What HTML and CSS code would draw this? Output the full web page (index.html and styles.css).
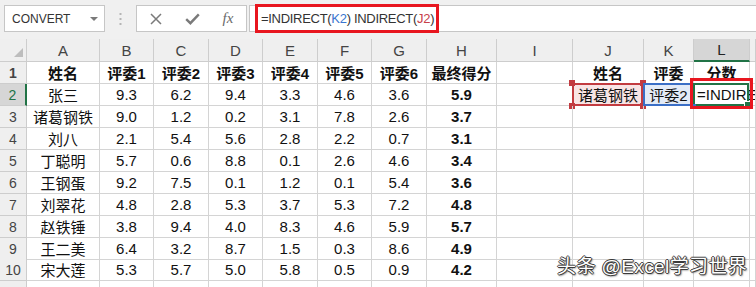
FILE: index.html
```html
<!DOCTYPE html>
<html lang="zh-CN">
<head>
    <meta charset="UTF-8">
    <title>INDIRECT</title>
    <link rel="stylesheet" href="styles.css">
</head>
<body>
    <div class="formula-bar">
        <div class="name-box">
            <span>CONVERT</span>
            <span class="caret-down"></span>
        </div>
        <div class="bar-dots">
            <svg width="3" height="12" viewBox="0 0 3 12"><rect x="0.5" y="0" width="2" height="2" fill="#b5b5b5"/><rect x="0.5" y="5" width="2" height="2" fill="#b5b5b5"/><rect x="0.5" y="10" width="2" height="2" fill="#b5b5b5"/></svg>
        </div>
        <div class="bar-buttons">
            <span class="bar-btn">
                <svg width="12" height="12" viewBox="0 0 12 12"><path d="M1 1L11 11M11 1L1 11" stroke="#7a7a7a" stroke-width="1.5" fill="none"/></svg>
            </span>
            <span class="bar-btn">
                <svg width="15" height="12" viewBox="0 0 15 12"><path d="M1.2 6.2L5.4 10.2L13.8 1.4" stroke="#7a7a7a" stroke-width="2.4" fill="none"/></svg>
            </span>
            <span class="bar-btn fx">fx</span>
        </div>
        <div class="formula-input">
            <div class="formula-mark">=INDIRECT(<span class="ref-k">K2</span>) INDIRECT(<span class="ref-j">J2</span>)<span class="text-cursor"></span></div>
        </div>
    </div>

    <div class="sheet">
        <div class="row head-row">
            <div class="cell corner"><span class="corner-tri"></span></div>
            <div class="cell col-head">A</div>
            <div class="cell col-head">B</div>
            <div class="cell col-head">C</div>
            <div class="cell col-head">D</div>
            <div class="cell col-head">E</div>
            <div class="cell col-head">F</div>
            <div class="cell col-head">G</div>
            <div class="cell col-head">H</div>
            <div class="cell col-head">I</div>
            <div class="cell col-head">J</div>
            <div class="cell col-head">K</div>
            <div class="cell col-head active-col">L</div>
            <div class="cell col-head"></div>
        </div>
        <div class="row bold">
            <div class="cell row-head">1</div>
            <div class="cell">姓名</div>
            <div class="cell">评委1</div>
            <div class="cell">评委2</div>
            <div class="cell">评委3</div>
            <div class="cell">评委4</div>
            <div class="cell">评委5</div>
            <div class="cell">评委6</div>
            <div class="cell">最终得分</div>
            <div class="cell"></div>
            <div class="cell">姓名</div>
            <div class="cell">评委</div>
            <div class="cell">分数</div>
            <div class="cell"></div>
        </div>
        <div class="row">
            <div class="cell row-head active-row">2</div>
            <div class="cell">张三</div>
            <div class="cell">9.3</div>
            <div class="cell">6.2</div>
            <div class="cell">9.4</div>
            <div class="cell">3.3</div>
            <div class="cell">4.6</div>
            <div class="cell">3.6</div>
            <div class="cell score">5.9</div>
            <div class="cell"></div>
            <div class="cell ref-cell ref-red">诸葛钢铁<span class="ref-frame"></span></div>
            <div class="cell ref-cell ref-blue">评委2<span class="ref-frame"></span></div>
            <div class="cell edit-cell">=INDIRE<span class="edit-frame"></span><span class="note-box"></span></div>
            <div class="cell"></div>
        </div>
        <div class="row">
            <div class="cell row-head">3</div>
            <div class="cell">诸葛钢铁</div>
            <div class="cell">9.0</div>
            <div class="cell">1.2</div>
            <div class="cell">0.2</div>
            <div class="cell">3.1</div>
            <div class="cell">7.8</div>
            <div class="cell">2.6</div>
            <div class="cell score">3.7</div>
            <div class="cell"></div>
            <div class="cell"></div>
            <div class="cell"></div>
            <div class="cell"></div>
            <div class="cell"></div>
        </div>
        <div class="row">
            <div class="cell row-head">4</div>
            <div class="cell">刘八</div>
            <div class="cell">2.1</div>
            <div class="cell">5.4</div>
            <div class="cell">5.6</div>
            <div class="cell">2.8</div>
            <div class="cell">2.2</div>
            <div class="cell">0.7</div>
            <div class="cell score">3.1</div>
            <div class="cell"></div>
            <div class="cell"></div>
            <div class="cell"></div>
            <div class="cell"></div>
            <div class="cell"></div>
        </div>
        <div class="row">
            <div class="cell row-head">5</div>
            <div class="cell">丁聪明</div>
            <div class="cell">5.7</div>
            <div class="cell">0.6</div>
            <div class="cell">8.8</div>
            <div class="cell">0.1</div>
            <div class="cell">2.6</div>
            <div class="cell">4.6</div>
            <div class="cell score">3.4</div>
            <div class="cell"></div>
            <div class="cell"></div>
            <div class="cell"></div>
            <div class="cell"></div>
            <div class="cell"></div>
        </div>
        <div class="row">
            <div class="cell row-head">6</div>
            <div class="cell">王钢蛋</div>
            <div class="cell">9.2</div>
            <div class="cell">7.5</div>
            <div class="cell">0.1</div>
            <div class="cell">1.2</div>
            <div class="cell">0.1</div>
            <div class="cell">5.4</div>
            <div class="cell score">3.6</div>
            <div class="cell"></div>
            <div class="cell"></div>
            <div class="cell"></div>
            <div class="cell"></div>
            <div class="cell"></div>
        </div>
        <div class="row">
            <div class="cell row-head">7</div>
            <div class="cell">刘翠花</div>
            <div class="cell">4.8</div>
            <div class="cell">2.8</div>
            <div class="cell">5.3</div>
            <div class="cell">3.7</div>
            <div class="cell">5.3</div>
            <div class="cell">7.2</div>
            <div class="cell score">4.8</div>
            <div class="cell"></div>
            <div class="cell"></div>
            <div class="cell"></div>
            <div class="cell"></div>
            <div class="cell"></div>
        </div>
        <div class="row">
            <div class="cell row-head">8</div>
            <div class="cell">赵铁锤</div>
            <div class="cell">3.8</div>
            <div class="cell">9.4</div>
            <div class="cell">4.0</div>
            <div class="cell">8.3</div>
            <div class="cell">4.6</div>
            <div class="cell">5.9</div>
            <div class="cell score">5.7</div>
            <div class="cell"></div>
            <div class="cell"></div>
            <div class="cell"></div>
            <div class="cell"></div>
            <div class="cell"></div>
        </div>
        <div class="row short">
            <div class="cell row-head">9</div>
            <div class="cell">王二美</div>
            <div class="cell">6.4</div>
            <div class="cell">3.2</div>
            <div class="cell">8.7</div>
            <div class="cell">1.5</div>
            <div class="cell">0.3</div>
            <div class="cell">8.6</div>
            <div class="cell score">4.9</div>
            <div class="cell"></div>
            <div class="cell"></div>
            <div class="cell"></div>
            <div class="cell"></div>
            <div class="cell"></div>
        </div>
        <div class="row">
            <div class="cell row-head">10</div>
            <div class="cell">宋大莲</div>
            <div class="cell">5.3</div>
            <div class="cell">5.7</div>
            <div class="cell">5.0</div>
            <div class="cell">5.8</div>
            <div class="cell">0.5</div>
            <div class="cell">0.9</div>
            <div class="cell score">4.2</div>
            <div class="cell"></div>
            <div class="cell"></div>
            <div class="cell"></div>
            <div class="cell"></div>
            <div class="cell"></div>
        </div>
        <div class="row">
            <div class="cell row-head"></div>
            <div class="cell"></div>
            <div class="cell"></div>
            <div class="cell"></div>
            <div class="cell"></div>
            <div class="cell"></div>
            <div class="cell"></div>
            <div class="cell"></div>
            <div class="cell"></div>
            <div class="cell"></div>
            <div class="cell"></div>
            <div class="cell"></div>
            <div class="cell"></div>
            <div class="cell"></div>
        </div>
    </div>

    <div class="watermark">头条 @Excel学习世界</div>
</body>
</html>
```

FILE: styles.css
```css
body {
    margin: 0;
    width: 756px;
    height: 287px;
    overflow: hidden;
    position: relative;
    background-color: #fff;
    font-family: "Liberation Sans", "Noto Sans CJK SC", sans-serif;
    color: #111;
}

/* formula bar */
.formula-bar {
    display: flex;
    align-items: flex-start;
    height: 39px;
    padding: 5px 0 0 4px;
    box-sizing: border-box;
    background-color: #f0f0f0;
}
.name-box {
    display: flex;
    align-items: center;
    justify-content: space-between;
    width: 101px;
    height: 27px;
    box-sizing: border-box;
    padding: 0 6px 0 7px;
    border: 1px solid #c6c6c6;
    background-color: #fff;
    font-size: 12px;
    color: #333;
}
.caret-down {
    width: 0;
    height: 0;
    border-left: 4px solid transparent;
    border-right: 4px solid transparent;
    border-top: 4px solid #7a7a7a;
}
.bar-dots {
    display: flex;
    align-items: center;
    justify-content: center;
    width: 31px;
    height: 27px;
}
.bar-buttons {
    display: flex;
    align-items: center;
    width: 111px;
    height: 27px;
    box-sizing: border-box;
    padding-left: 1px;
    border: 1px solid #c6c6c6;
    background-color: #fff;
}
.bar-btn {
    display: flex;
    align-items: center;
    justify-content: center;
    width: 36px;
}
.fx {
    font-family: "Liberation Serif", serif;
    font-style: italic;
    font-size: 15px;
    color: #6a6a6a;
}
.formula-input {
    flex: 1;
    display: flex;
    align-items: center;
    height: 27px;
    margin-left: 2px;
    padding-left: 5px;
    box-sizing: border-box;
    border: 1px solid #c6c6c6;
    border-right: none;
    background-color: #fff;
}
.formula-mark {
    display: flex;
    align-items: center;
    width: 184px;
    height: 29px;
    box-sizing: border-box;
    padding-left: 3px;
    border: 3px solid #e8161f;
    font-size: 13px;
    letter-spacing: -0.3px;
    color: #333;
    white-space: pre;
}
.ref-k {
    color: #3a76cf;
}
.ref-j {
    color: #c8404a;
}
.text-cursor {
    width: 1px;
    height: 18px;
    margin-left: 4px;
    background-color: #000;
}

/* sheet grid */
.row {
    display: grid;
    grid-template-columns: 27px 73px 54px 55px 54px 55px 54px 55px 70px 76px 71px 50px 56px 1fr;
    height: 22px;
}
.head-row {
    height: 23px;
}
.row.short {
    height: 21px;
}
.cell {
    position: relative;
    display: flex;
    align-items: center;
    justify-content: center;
    box-sizing: border-box;
    border-right: 1px solid #d4d4d4;
    border-bottom: 1px solid #d4d4d4;
    font-size: 15px;
    white-space: nowrap;
}
.bold .cell,
.score {
    font-weight: bold;
}
.col-head,
.row-head,
.corner {
    background-color: #efefef;
    color: #444;
    border-color: #cdcdcd;
    font-weight: normal;
}
.row-head {
    font-size: 14px;
}
.corner-tri {
    position: absolute;
    right: 3px;
    bottom: 4px;
    width: 0;
    height: 0;
    border-left: 9px solid transparent;
    border-bottom: 9px solid #bdbdbd;
}
.active-col {
    background-color: #d6d6d6;
    color: #222;
    border-bottom: 2px solid #217346;
}
.active-row {
    background-color: #d6d6d6;
    color: #217346;
    border-right: 2px solid #217346;
}

/* referenced cells */
.ref-red {
    background-color: #f8e4e4;
}
.ref-blue {
    background-color: #e3ebf7;
}
.ref-frame {
    position: absolute;
    top: -1px;
    left: -1px;
    right: 0;
    bottom: -1px;
    border: 2px solid #c23b40;
}
.ref-blue .ref-frame {
    border-color: #3b6fc6;
}
.ref-red::after {
    content: "";
    position: absolute;
    inset: -4px -3px -4px -4px;
    background:
        linear-gradient(#c23b40, #c23b40) left top / 6px 6px no-repeat,
        linear-gradient(#c23b40, #c23b40) right top / 6px 6px no-repeat,
        linear-gradient(#c23b40, #c23b40) left bottom / 6px 6px no-repeat,
        linear-gradient(#c23b40, #c23b40) right bottom / 6px 6px no-repeat;
}
.ref-blue::after {
    content: "";
    position: absolute;
    right: -3px;
    bottom: -3px;
    width: 4px;
    height: 4px;
    background-color: #3b6fc6;
    z-index: 2;
}

/* cell being edited */
.edit-cell {
    justify-content: flex-start;
    padding-left: 3px;
    overflow: visible;
}
.edit-frame {
    position: absolute;
    top: -1px;
    left: -1px;
    right: 0;
    bottom: -1px;
    border: 2px solid #217346;
}
.edit-frame::after {
    content: "";
    position: absolute;
    right: -4px;
    bottom: -4px;
    width: 5px;
    height: 5px;
    background-color: #217346;
    border: 1px solid #fff;
}
.note-box {
    position: absolute;
    top: -6px;
    left: -4px;
    width: 63px;
    height: 31px;
    box-sizing: border-box;
    border: 3px solid #e8161f;
    z-index: 3;
}

.watermark {
    position: absolute;
    left: 557px;
    top: 257px;
    font-size: 19px;
    letter-spacing: 0.4px;
    line-height: 1;
    color: #fff;
    white-space: nowrap;
    text-shadow: -1px 0 #3a3a3a, 1px 0 #3a3a3a, 0 -1px #3a3a3a, 0 1px #3a3a3a, 1px 1px 2px #222;
}
```
